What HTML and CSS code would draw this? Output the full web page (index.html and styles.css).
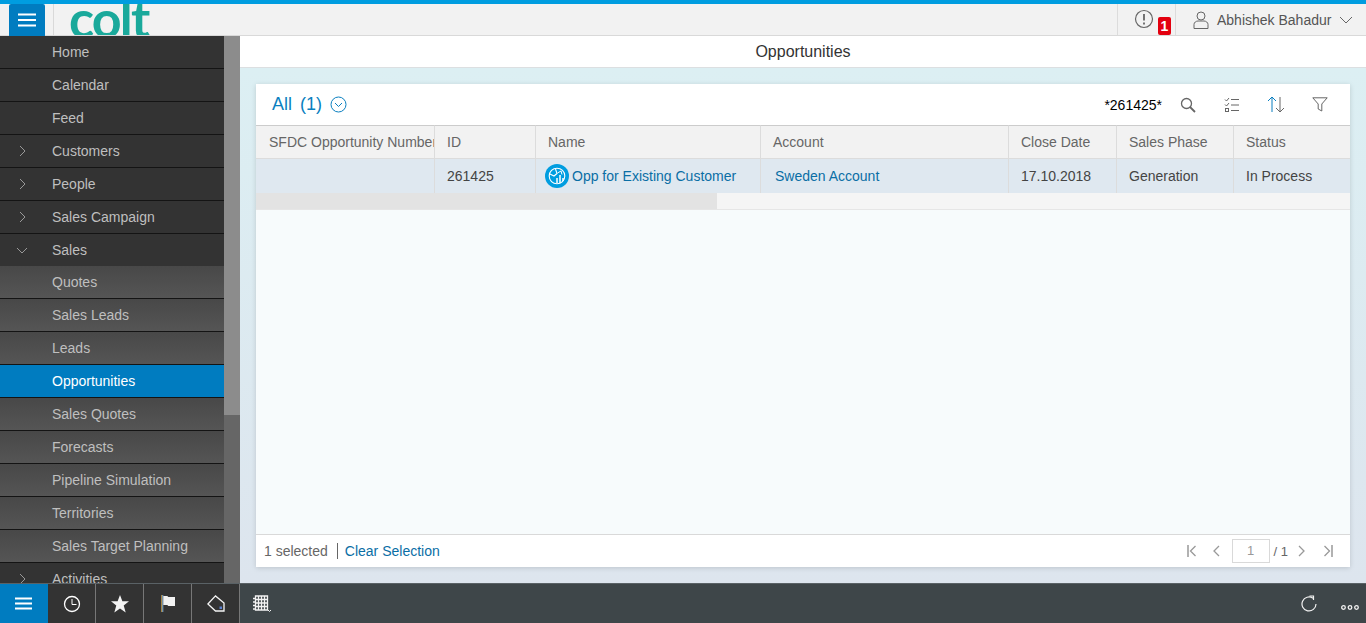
FILE: index.html
```html
<!DOCTYPE html>
<html>
<head>
    <meta charset="utf-8">
    <title>Opportunities</title>
    <link rel="stylesheet" href="styles.css">
</head>
<body>
<div class="page">
    <header class="topbar">
        <button class="menu-btn">
            <svg width="18" height="14" viewBox="0 0 18 14"><path d="M0 1.500h18M0 7h18M0 12.500h18" stroke="#fff" stroke-width="2"/></svg>
        </button>
        <div class="logo-wrap"><span class="logo">colt</span></div>
        <div class="alert">
            <svg width="20" height="20" viewBox="0 0 20 20" fill="none" stroke="#666"><circle cx="10" cy="10" r="8.500" stroke-width="1.200"/><path d="M10 5v6.500M10 13.500v2" stroke-width="1.800"/></svg>
            <span class="badge">1</span>
        </div>
        <div class="user">
            <svg width="16" height="18" viewBox="0 0 16 18" fill="none" stroke="#666"><circle cx="8" cy="5" r="4"/><path d="M1 17.500v-4c0-2 2-3.500 4-3.500h6c2 0 4 1.500 4 3.500v4z"/></svg>
            <span class="user-name">Abhishek Bahadur</span>
            <svg width="14" height="8" viewBox="0 0 14 8" fill="none" stroke="#666"><path d="M1 1l6 6 6-6"/></svg>
        </div>
    </header>

    <div class="middle">
        <aside class="sidebar">
            <nav class="nav">
                <a class="nav-row">Home</a>
                <a class="nav-row">Calendar</a>
                <a class="nav-row">Feed</a>
                <a class="nav-row"><svg class="chev" width="7" height="12" viewBox="0 0 7 12"><path d="M1 1l5 5-5 5"/></svg>Customers</a>
                <a class="nav-row"><svg class="chev" width="7" height="12" viewBox="0 0 7 12"><path d="M1 1l5 5-5 5"/></svg>People</a>
                <a class="nav-row"><svg class="chev" width="7" height="12" viewBox="0 0 7 12"><path d="M1 1l5 5-5 5"/></svg>Sales Campaign</a>
                <a class="nav-row open"><svg class="chev-down" width="12" height="7" viewBox="0 0 12 7"><path d="M1 1l5 5 5-5"/></svg>Sales</a>
                <a class="nav-row sub">Quotes</a>
                <a class="nav-row sub">Sales Leads</a>
                <a class="nav-row sub">Leads</a>
                <a class="nav-row sub active">Opportunities</a>
                <a class="nav-row sub">Sales Quotes</a>
                <a class="nav-row sub">Forecasts</a>
                <a class="nav-row sub">Pipeline Simulation</a>
                <a class="nav-row sub">Territories</a>
                <a class="nav-row sub">Sales Target Planning</a>
                <a class="nav-row"><svg class="chev" width="7" height="12" viewBox="0 0 7 12"><path d="M1 1l5 5-5 5"/></svg>Activities</a>
            </nav>
            <div class="nav-scroll"><div class="nav-thumb"></div></div>
        </aside>

        <main class="content">
            <div class="title-bar">Opportunities</div>
            <div class="canvas">
                <section class="card">
                    <div class="toolbar">
                        <span class="view-name">All</span>
                        <span class="view-count">(1)</span>
                        <svg class="view-drop" width="17" height="17" viewBox="0 0 17 17" fill="none" stroke="#0a7fc0"><circle cx="8.500" cy="8.500" r="7.500"/><path d="M5 7l3.500 3.500L12 7"/></svg>
                        <span class="search-term">*261425*</span>
                        <div class="tools">
                            <svg width="16" height="16" viewBox="0 0 16 16" fill="none" stroke="#666" stroke-width="1.300"><circle cx="6.500" cy="6.500" r="5"/><path d="M10 10l5 5" stroke-width="1.800"/></svg>
                            <svg width="16" height="16" viewBox="0 0 16 16" fill="none" stroke="#666"><path d="M1 2.500l1.500 1.500L5 1M1 7.500L2.500 9 5 6M7 2.500h8M7 8h8M7 13.500h8"/><rect x="1.500" y="11.500" width="3" height="3"/></svg>
                            <svg width="18" height="17" viewBox="0 0 18 17" fill="none"><path d="M5 16V1.500M1 5l4-4 4 4" stroke="#0a7fc0"/><path d="M13 1v14.500M9 12l4 4 4-4" stroke="#666"/></svg>
                            <svg width="16" height="15" viewBox="0 0 16 15" fill="none" stroke="#666"><path d="M.8.800h14.400L9.800 7v7L6.200 12V7z"/></svg>
                        </div>
                    </div>

                    <div class="table">
                        <div class="cell head">SFDC Opportunity Number</div>
                        <div class="cell head">ID</div>
                        <div class="cell head">Name</div>
                        <div class="cell head">Account</div>
                        <div class="cell head">Close Date</div>
                        <div class="cell head">Sales Phase</div>
                        <div class="cell head">Status</div>

                        <div class="cell data"></div>
                        <div class="cell data">261425</div>
                        <div class="cell data name-cell">
                            <span class="opp-icon">
                                <svg width="18" height="18" viewBox="0 0 18 18" fill="none" stroke="#fff" stroke-width="1.100"><circle cx="9" cy="9" r="7.800"/><path d="M2 7l4 2 3-2.500L7.500 2"/><path d="M9 16v-5M12 16V8M15 14v-3" stroke-width="1.500"/><path d="M9.500 6l3.500-2 1 3.500" stroke-width="1"/></svg>
                            </span>
                            <a class="link">Opp for Existing Customer</a>
                        </div>
                        <div class="cell data account-cell"><a class="link">Sweden Account</a></div>
                        <div class="cell data">17.10.2018</div>
                        <div class="cell data">Generation</div>
                        <div class="cell data">In Process</div>
                    </div>

                    <div class="h-scroll"><div class="h-thumb"></div></div>
                    <div class="table-empty"></div>

                    <div class="footer">
                        <span class="selected">1 selected</span>
                        <a class="link clear">Clear Selection</a>
                        <div class="pager">
                            <svg width="10" height="12" viewBox="0 0 10 12" fill="none" stroke="#999"><path d="M1 0v12" stroke-width="1.500"/><path d="M8.500 1l-5 5 5 5" stroke-width="1.300"/></svg>
                            <svg class="pg-prev" width="8" height="12" viewBox="0 0 8 12" fill="none" stroke="#999"><path d="M7 1L2 6l5 5" stroke-width="1.300"/></svg>
                            <span class="page-input">1</span>
                            <span class="page-total">/ 1</span>
                            <svg class="pg-next" width="8" height="12" viewBox="0 0 8 12" fill="none" stroke="#999"><path d="M1 1l5 5-5 5" stroke-width="1.300"/></svg>
                            <svg class="pg-last" width="10" height="12" viewBox="0 0 10 12" fill="none" stroke="#999"><path d="M9 0v12" stroke-width="1.500"/><path d="M1.500 1l5 5-5 5" stroke-width="1.300"/></svg>
                        </div>
                    </div>
                </section>
            </div>
        </main>
    </div>

    <footer class="bottombar">
        <div class="dock">
            <div class="dock-btn first">
                <svg width="18" height="13" viewBox="0 0 18 13"><path d="M0 1.500h17M0 6.500h17M0 11.500h17" stroke="#fff" stroke-width="2"/></svg>
            </div>
            <div class="dock-btn">
                <svg width="18" height="18" viewBox="0 0 18 18" fill="none" stroke="#fff"><circle cx="9" cy="9" r="7.500" stroke-width="1.300"/><path d="M9 4v5.500h4.500"/></svg>
            </div>
            <div class="dock-btn">
                <svg width="18" height="18" viewBox="0 0 18 18" fill="#f4f4f4"><path d="M9 0l2.400 6.300H18l-5.300 4.200L14.700 17.500 9 13.500l-5.700 4 2-7L0 6.300h6.600z"/></svg>
            </div>
            <div class="dock-btn">
                <svg width="14" height="17" viewBox="0 0 14 17"><path d="M.8 0v17" stroke="#d8a94e" stroke-width="1"/><path d="M1.800 0v17" stroke="#7fb0d8" stroke-width="1"/><path d="M2.300 1h4l1 1H14v9H7.300l-1-1h-4z" fill="#f2f2f2"/></svg>
            </div>
            <div class="dock-btn">
                <svg width="18" height="17" viewBox="0 0 18 17" fill="none" stroke="#f4f4f4" stroke-width="1.300"><path d="M.9 9L8.500.9 17 8v8H8.500z"/><rect x="12.500" y="11.500" width="2.500" height="2.500" fill="#5b7fd0" stroke="none"/></svg>
            </div>
        </div>
        <div class="bottom-left">
            <svg width="20" height="17" viewBox="0 0 20 17" fill="none" stroke="#f2f2f2" stroke-width="1.300"><path d="M3.500 1h12v14h-12zM6.500 1v14M9.500 1v14M12.500 1v14M3.500 4.500h12M3.500 8h12M3.500 11.500h12M1 3.500h3M1 7h3M1 10.500h3M1 14h3"/><path d="M16 15l1.500 1.500L19 15" stroke-width="1"/></svg>
        </div>
        <div class="bottom-right">
            <svg width="16" height="17" viewBox="0 0 16 17" fill="none" stroke="#f2f2f2" stroke-width="1.200"><path d="M12 3.200A7 7 0 1 0 15 9"/><path d="M8.500 1h4v4"/></svg>
            <svg class="more" width="18" height="5" viewBox="0 0 18 5" fill="none" stroke="#f2f2f2" stroke-width="1.300"><circle cx="2.500" cy="2.500" r="1.800"/><circle cx="9" cy="2.500" r="1.800"/><circle cx="15.500" cy="2.500" r="1.800"/></svg>
        </div>
    </footer>
</div>
</body>
</html>
```

FILE: styles.css
```css
html, body {
    margin: 0;
    padding: 0;
    height: 100%;
    overflow: hidden;
    font-family: "Liberation Sans", Arial, sans-serif;
    font-size: 14px;
}

svg { display: block; flex: none; }

.page {
    display: flex;
    flex-direction: column;
    height: 623px;
}

/* top bar */
.topbar {
    display: flex;
    align-items: stretch;
    height: 31px;
    flex: none;
    border-top: 4px solid #009de0;
    border-bottom: 1px solid #d9d9d9;
    background: #f2f2f2;
}

.menu-btn {
    width: 36px;
    height: 32px;
    margin-left: 9px;
    padding: 0;
    border: 0;
    border-radius: 2px 2px 0 0;
    background: #007cc0;
    display: flex;
    align-items: center;
    justify-content: center;
}

.logo-wrap {
    margin-left: 8px;
    padding-left: 15px;
    border-left: 1px solid #d9d9d9;
    overflow: hidden;
    flex: 1;
}

.logo {
    display: block;
    font-family: "Lato", sans-serif;
    font-size: 52px;
    line-height: 32px;
    font-weight: 700;
    color: #1aa99b;
    letter-spacing: -1.800px;
    margin-top: -2px;
}

.alert {
    width: 59px;
    border-left: 1px solid #dcdcdc;
    border-right: 1px solid #dcdcdc;
    position: relative;
    box-sizing: border-box;
    padding: 5px 0 0 16px;
}

.badge {
    position: absolute;
    left: 40px;
    top: 13px;
    width: 13px;
    height: 18px;
    border-radius: 2px;
    background: #e3000f;
    color: #fff;
    font-size: 14px;
    font-weight: 700;
    line-height: 18px;
    text-align: center;
}

.user {
    display: flex;
    align-items: center;
    width: 190px;
    box-sizing: border-box;
    padding-left: 17px;
    color: #555;
    font-size: 14px;
}

.user-name { margin: 0 8px 0 8px; }

/* middle */
.middle {
    display: flex;
    flex: 1;
    min-height: 0;
}

.sidebar {
    display: flex;
    width: 240px;
    flex: none;
    overflow: hidden;
    background: #333;
}

.nav {
    width: 224px;
    flex: none;
}

.nav-row {
    display: flex;
    align-items: center;
    position: relative;
    height: 32px;
    padding-left: 52px;
    border-bottom: 1px solid #141414;
    background: #333;
    color: #bfbfbf;
    font-size: 14px;
}

.nav-row.open { border-bottom: 0; }

.nav-row.sub {
    background: linear-gradient(#484848, #555);
}

.nav-row.active {
    background: #007cc0;
    color: #fff;
}

.chev, .chev-down {
    position: absolute;
    fill: none;
    stroke: #999;
}

.chev { left: 19px; top: 10px; }
.chev-down { left: 16px; top: 13px; }

.nav-scroll {
    flex: 1;
    background: #666;
}

.nav-thumb {
    height: 379px;
    background: #8c8c8c;
}

/* content */
.content {
    flex: 1;
    min-width: 0;
    display: flex;
    flex-direction: column;
}

.title-bar {
    height: 31px;
    flex: none;
    background: #fff;
    border-bottom: 1px solid #dcdfe1;
    text-align: center;
    line-height: 31px;
    font-size: 16px;
    color: #333;
}

.canvas {
    flex: 1;
    min-height: 0;
    padding: 16px;
    background: linear-gradient(#dceff3, #dde5ee);
    display: flex;
}

.card {
    flex: 1;
    display: flex;
    flex-direction: column;
    background: #f7fbfc;
    box-shadow: 0 1px 5px rgba(0, 0, 0, 0.15);
}

.toolbar {
    display: flex;
    align-items: center;
    height: 41px;
    flex: none;
    padding-left: 16px;
    background: #fff;
}

.view-name, .view-count {
    font-size: 18px;
    color: #0a7fc0;
}

.view-count { margin-left: 8px; }
.view-drop { margin-left: 8px; }

.search-term {
    margin-left: auto;
    color: #000;
    font-size: 14px;
}

.tools {
    display: flex;
    align-items: center;
    gap: 27px;
    margin-left: 18px;
    padding-right: 22px;
}

.tools svg:first-child { margin-right: 1px; }

.table {
    display: grid;
    grid-template-columns: 179px 101px 225px 248px 108px 117px 116px;
    grid-template-rows: 34px 34px;
    flex: none;
}

.cell {
    display: flex;
    align-items: center;
    box-sizing: border-box;
    padding-left: 12px;
    border-right: 1px solid #dcdcdc;
    white-space: nowrap;
    overflow: hidden;
    color: #666;
    font-size: 14px;
}

.cell:nth-child(7n) { border-right: 0; }

.cell.head {
    background: #f2f2f2;
    border-top: 1px solid #ccc;
    border-bottom: 1px solid #dcdcdc;
    padding-bottom: 1px;
}

.cell.head:first-child { padding-left: 13px; }

.cell.data {
    background: #dfe8f0;
    color: #444;
}

.link { color: #0a6ea5; font-size: 14px; }

.name-cell { padding-left: 9px; }

.account-cell { padding-left: 14px; }

.opp-icon {
    width: 24px;
    height: 24px;
    flex: none;
    border-radius: 50%;
    background: #009de0;
    margin-right: 3px;
    display: flex;
    align-items: center;
    justify-content: center;
}

.h-scroll {
    height: 16px;
    flex: none;
    background: #f5f5f5;
    border-bottom: 1px solid #e6e6e6;
}

.h-thumb {
    width: 461px;
    height: 16px;
    background: #e3e3e3;
}

.table-empty { flex: 1; }

.footer {
    display: flex;
    align-items: center;
    height: 32px;
    flex: none;
    padding-left: 8px;
    background: #fff;
    border-top: 1px solid #d9d9d9;
    color: #666;
}

.clear {
    margin-left: 9px;
    padding-left: 7px;
    border-left: 1px solid #666;
    line-height: 16px;
}

.pager {
    display: flex;
    align-items: center;
    margin-left: auto;
    padding-right: 17px;
}

.pg-prev { margin-left: 15px; }

.page-input {
    width: 36px;
    height: 22px;
    margin-left: 12px;
    border: 1px solid #d9d9d9;
    text-align: center;
    line-height: 22px;
    color: #999;
    font-size: 13px;
}

.page-total { margin-left: 4px; color: #666; font-size: 13px; }
.pg-next { margin-left: 10px; }
.pg-last { margin-left: 17px; }

/* bottom bar */
.bottombar {
    display: flex;
    align-items: center;
    height: 40px;
    flex: none;
    background: #3e4649;
    border-top: 1px solid #5a6266;
    box-sizing: border-box;
}

.dock {
    display: flex;
    width: 240px;
    height: 100%;
    background: #333;
}

.dock-btn {
    width: 47px;
    display: flex;
    align-items: center;
    justify-content: center;
    border-right: 1px solid #777;
}

.dock-btn.first {
    width: 48px;
    background: #007cc0;
    border-right: 0;
}

.bottom-left { margin-left: 12px; }

.bottom-right {
    display: flex;
    align-items: center;
    gap: 24px;
    margin-left: auto;
    padding-right: 7px;
}

.more { margin-top: 8px; }
```
